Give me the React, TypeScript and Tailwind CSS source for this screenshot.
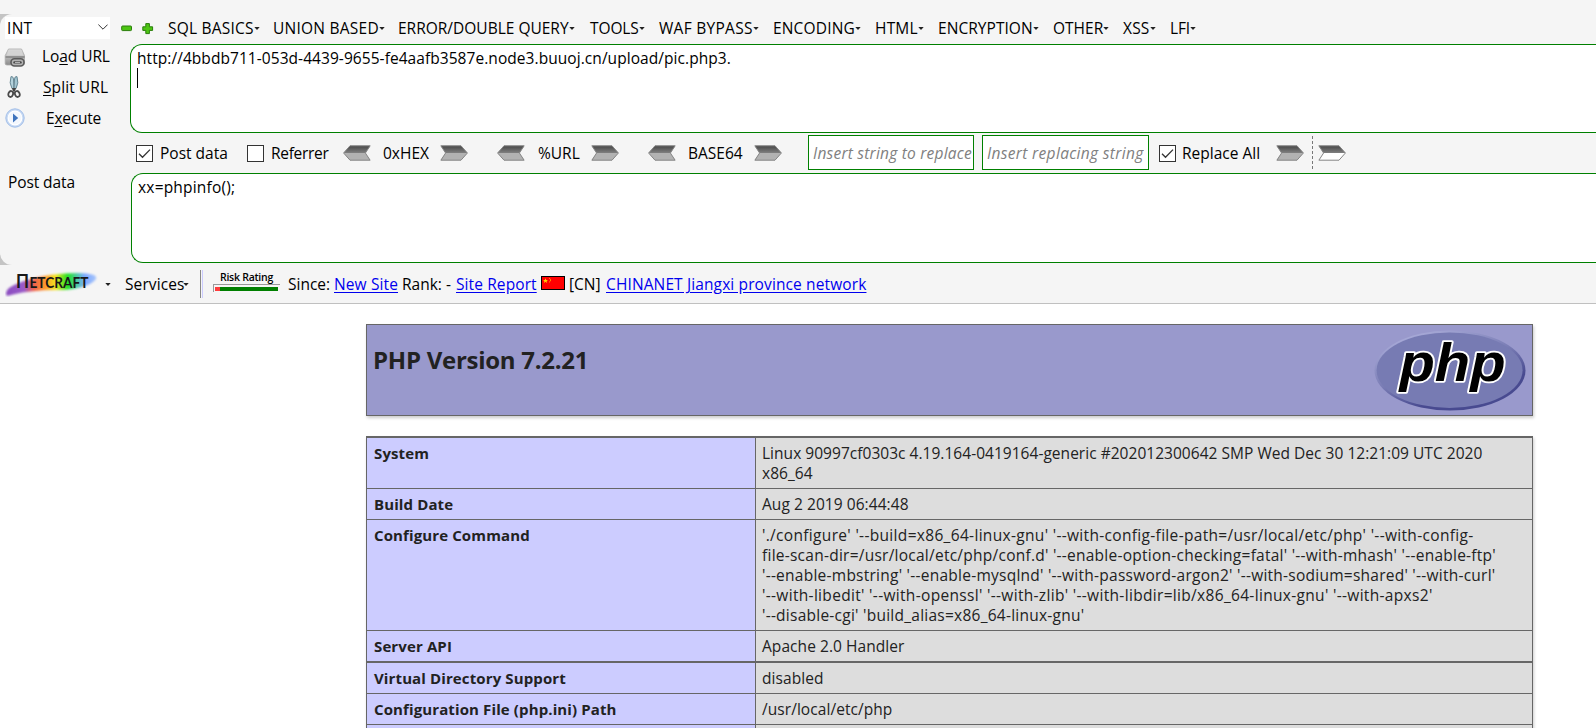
import type { ReactNode } from "react";

const menus = [
  { label: "SQL BASICS", box: "w-[105px] tracking-[0.22px]" },
  { label: "UNION BASED", box: "w-[125px] tracking-[0.24px]" },
  { label: "ERROR/DOUBLE QUERY", box: "w-[192px] tracking-[0px]" },
  { label: "TOOLS", box: "w-[69px] tracking-[-0.1px]" },
  { label: "WAF BYPASS", box: "w-[114px] tracking-[0.28px]" },
  { label: "ENCODING", box: "w-[102px] tracking-[0.16px]" },
  { label: "HTML", box: "w-[63px] tracking-[0.2px]" },
  { label: "ENCRYPTION", box: "w-[115px] tracking-[0.05px]" },
  { label: "OTHER", box: "w-[70px]" },
  { label: "XSS", box: "w-[47px] tracking-[0.2px]" },
  { label: "LFI", box: "w-[40px] tracking-[-0.2px]" },
];

function Caret({ className = "" }: { className?: string }) {
  return (
    <svg className={`h-[3px] w-[6px] shrink-0 ${className}`} viewBox="0 0 6 3">
      <path d="M0.3 0H5.7L3 2.9Z" fill="#222" />
    </svg>
  );
}

function Arrow({ left = false, hollow = false }: { left?: boolean; hollow?: boolean }) {
  return (
    <svg className={`h-[16px] w-[28px] shrink-0 ${left ? "-scale-x-100" : ""}`} viewBox="0 0 28 16">
      <defs>
        <linearGradient id="arrowTop" x1="0" y1="0" x2="0" y2="1">
          <stop offset="0" stopColor="#464646" />
          <stop offset="1" stopColor="#808080" />
        </linearGradient>
      </defs>
      <path d="M0.6 0.8H21L27.4 8H5.6Z" fill="url(#arrowTop)" />
      <path d="M5.6 8H27.4L21 15.2H0.6Z" fill={hollow ? "#fff" : "#b2b2b2"} />
      <path d="M0.9 0.8H21L27.4 8L21 15.2H0.9L5.6 8Z" fill="none" stroke="#858585" strokeWidth="1" />
    </svg>
  );
}

function Check({ on = false, className = "" }: { on?: boolean; className?: string }) {
  return (
    <span className={`flex h-[17px] w-[17px] shrink-0 items-center justify-center border border-[#333] bg-white ${className}`}>
      {on && (
        <svg className="h-[13px] w-[13px]" viewBox="0 0 13 13">
          <path d="M1 6.8L4.5 10.3L12 2.6" fill="none" stroke="#333" strokeWidth="1.3" />
        </svg>
      )}
    </span>
  );
}

function DriveIcon() {
  return (
    <svg className="h-[20px] w-[22px]" viewBox="0 0 22 20">
      <defs>
        <linearGradient id="drive" x1="0" y1="0" x2="0" y2="1">
          <stop offset="0" stopColor="#e4e4e4" />
          <stop offset="1" stopColor="#8b8b8b" />
        </linearGradient>
      </defs>
      <path d="M4.5 1H17.5L20.5 7.5V15.5Q20.5 17 19 17H3Q1.2 17 1.2 15.5V7.5Z" fill="url(#drive)" stroke="#aaa" strokeWidth="0.8" />
      <path d="M5 2.2H17L19.4 7.5H2.6Z" fill="#d4d4d4" />
      <rect x="1.6" y="8.2" width="19" height="1.6" fill="#858585" />
      <rect x="7" y="10.8" width="13" height="7.2" rx="3.4" fill="#b4b4b4" stroke="#5a5a5a" strokeWidth="1.6" />
      <path d="M10.5 14.4H16.5" stroke="#4a4a4a" strokeWidth="2.4" strokeLinecap="round" />
      <path d="M11 14.4H16" stroke="#ddd" strokeWidth="0.8" />
    </svg>
  );
}

function ScissorsIcon() {
  return (
    <svg className="h-[24px] w-[14px]" viewBox="0 0 14 24">
      <path d="M4 1.6Q6.2 1 6.5 4L7 13.6L5 13.6Q1.8 8 4 1.6Z" fill="#b5d3dd" stroke="#5d7f8c" strokeWidth="0.9" />
      <path d="M10 1.6Q7.8 1 7.5 4L7 13.6L9 13.6Q12.2 8 10 1.6Z" fill="#a3c6d2" stroke="#5d7f8c" strokeWidth="0.9" />
      <path d="M5 13L9 13L8 16.5H6Z" fill="#444" />
      <ellipse cx="3.7" cy="19" rx="2.3" ry="3" transform="rotate(22 3.7 19)" fill="none" stroke="#4a4a4a" strokeWidth="1.8" />
      <ellipse cx="10.3" cy="19" rx="2.3" ry="3" transform="rotate(-22 10.3 19)" fill="none" stroke="#4a4a4a" strokeWidth="1.8" />
    </svg>
  );
}

function PlayIcon() {
  return (
    <svg className="h-[20px] w-[20px]" viewBox="0 0 20 20">
      <circle cx="10" cy="10" r="9.2" fill="#c5d8f3" stroke="#a3bfe8" strokeWidth="1" />
      <circle cx="10" cy="10" r="6.8" fill="#f3f7fd" stroke="#fff" strokeWidth="1.2" />
      <path d="M8 5.4L13.2 10L8 14.6Z" fill="#3f74bd" />
    </svg>
  );
}

function Netcraft() {
  return (
    <svg className="h-[26px] w-[94px] shrink-0" viewBox="0 0 94 26">
      <defs>
        <linearGradient id="rainbow" x1="0" y1="0" x2="1" y2="0">
          <stop offset="0" stopColor="#8a4cc0" />
          <stop offset="0.2" stopColor="#9a5ac8" />
          <stop offset="0.31" stopColor="#f0604a" />
          <stop offset="0.44" stopColor="#ff9a2a" />
          <stop offset="0.55" stopColor="#f2e520" />
          <stop offset="0.68" stopColor="#20e020" />
          <stop offset="0.79" stopColor="#50c8a8" />
          <stop offset="0.87" stopColor="#7aa6ff" />
          <stop offset="1" stopColor="#a9c6fb" />
        </linearGradient>
        <filter id="soften"><feGaussianBlur stdDeviation="0.8" /></filter>
      </defs>
      <path d="M1.5 24.5Q-1 19 9 14Q32 4 60 2.5Q80 1 89 4Q94 7 88 11Q76 19 52 19Q26 19 8 23.5Q4 25 1.5 24.5Z" fill="url(#rainbow)" filter="url(#soften)" />
      <text x="11" y="17.2" fontFamily="Lato, sans-serif" fontWeight="700" fontSize="18" textLength="13" lengthAdjust="spacingAndGlyphs" fill="#181818">Π</text>
      <text x="24.5" y="17.2" fontFamily="Lato, sans-serif" fontWeight="700" fontSize="15" textLength="59" lengthAdjust="spacingAndGlyphs" fill="#181818">ETCRAFT</text>
    </svg>
  );
}

function RiskRating() {
  return (
    <span className="flex w-[67px] shrink-0 flex-col items-center">
      <span className="h-[12px] text-[10.5px] leading-[10px] font-semibold tracking-[-0.25px] whitespace-nowrap text-black">Risk Rating</span>
      <span className="flex h-[8px] w-[67px] border-t border-l border-[#999] pt-[2px] pr-[2px] pl-[1px]">
        <span className="h-[4px] w-[5px] bg-[#ff3c3c]" />
        <span className="h-[4px] flex-1 bg-[#007f00]" />
      </span>
    </span>
  );
}

function Flag() {
  return (
    <svg className="h-[14px] w-[24px] shrink-0" viewBox="0 0 24 14">
      <rect x="0.5" y="0.5" width="23" height="13" fill="#f00" stroke="#000" />
      <path d="M4.5 2.2L5.2 4H7L5.6 5.1L6.1 7L4.5 5.8L2.9 7L3.4 5.1L2 4H3.8Z" fill="#ffd800" />
      <path d="M8 2.2L9.5 3.2V5L8 6.4" fill="none" stroke="#ff9a00" strokeWidth="0.9" />
    </svg>
  );
}

function PhpLogo() {
  return (
    <svg className="h-[81px] w-[152px]" viewBox="0 0 152 81">
      <defs>
        <linearGradient id="rim" x1="0.2" y1="0" x2="0.8" y2="1">
          <stop offset="0" stopColor="#aeb0dc" />
          <stop offset="0.45" stopColor="#7a7db5" />
          <stop offset="0.75" stopColor="#484a90" />
          <stop offset="1" stopColor="#484a90" />
        </linearGradient>
      </defs>
      <ellipse cx="76" cy="40.5" rx="75.5" ry="40" fill="url(#rim)" />
      <ellipse cx="75.6" cy="40.2" rx="73" ry="37.8" fill="#777bb3" />
      <text x="25.5" y="51" fontFamily="Liberation Sans, sans-serif" fontWeight="700" fontStyle="italic" fontSize="54" textLength="106" lengthAdjust="spacingAndGlyphs" fill="#000" stroke="#fff" strokeWidth="3.6" strokeLinejoin="round" paintOrder="stroke">php</text>
    </svg>
  );
}

function Row({ name, lines, tall = "", top = "border-t" }: { name: string; lines: ReactNode; tall?: string; top?: string }) {
  return (
    <div className={`grid grid-cols-[388px_1fr] border-[#666] ${top}`}>
      <div className={`bg-[#ccccff] pt-[5px] pl-[7px] text-[15px] font-bold tracking-[0.12px] ${tall || "h-[30px]"}`}>{name}</div>
      <div className="border-l border-[#666] bg-[#dddddd] pt-[5px] pl-[6px] tracking-[0.06px] whitespace-nowrap">{lines}</div>
    </div>
  );
}

export default function App() {
  return (
    <div className="flex h-[728px] w-[1596px] flex-col overflow-hidden bg-white font-['Open_Sans',sans-serif] text-[15.5px] leading-[20px] text-black">
      <div className="h-[14px] shrink-0 bg-[#f5f5f5]" />
      <div className="h-[251px] shrink-0 bg-[#c4c4c4]">
        <div className="flex h-full flex-col rounded-l-[12px] bg-[#f5f5f5]">
          <div className="flex h-[30px] shrink-0 items-start">
            <div className="mt-[3px] ml-[5px] flex h-[22px] w-[105px] items-center justify-between bg-white pr-[2px] pl-[2px]">
              <span className="tracking-[0.3px]">INT</span>
              <svg className="mb-[3px] h-[6px] w-[10px]" viewBox="0 0 10 6">
                <path d="M0.4 0.6L5 5.2L9.6 0.6" fill="none" stroke="#333" />
              </svg>
            </div>
            <svg className="mt-[9px] ml-[11px] h-[12px] w-[33px]" viewBox="0 0 33 12">
              <rect x="0.7" y="3" width="9.8" height="4.6" rx="0.8" fill="#4cc512" stroke="#2b7d0c" />
              <path d="M24.8 0.6H28.4V3.8H31.6V7.4H28.4V10.6H24.8V7.4H21.8V3.8H24.8Z" fill="#4cc512" stroke="#2b7d0c" strokeLinejoin="round" />
            </svg>
            <div className="ml-[14px] flex pt-[4px]">
              {menus.map((m) => (
                <div key={m.label} className={`flex items-center whitespace-nowrap ${m.box}`}>
                  {m.label}
                  <Caret />
                </div>
              ))}
            </div>
          </div>

          <div className="flex h-[89px] shrink-0">
            <div className="-mt-[2px] flex w-[130px] flex-col">
              <div className="flex h-[31px] items-center">
                <span className="flex w-[42px] pt-[1px] pl-[4px]"><DriveIcon /></span>
                <span className="-mt-[2px] tracking-[-0.08px]">Lo<u className="underline-offset-2">a</u>d URL</span>
              </div>
              <div className="flex h-[31px] items-center">
                <span className="flex w-[43px] pl-[7px]"><ScissorsIcon /></span>
                <span className="-mt-[1px] tracking-[0.08px]"><u className="underline-offset-2">S</u>plit URL</span>
              </div>
              <div className="flex h-[31px] items-center">
                <span className="flex w-[46px] pl-[5px]"><PlayIcon /></span>
                <span className="tracking-[-0.25px]">E<u className="underline-offset-2">x</u>ecute</span>
              </div>
            </div>
            <div className="flex-1 rounded-l-[12px] border border-r-0 border-[#008000] bg-white pt-[3px] pl-[6px]">
              <div className="tracking-[0.06px]">http://4bbdb711-053d-4439-9655-fe4aafb3587e.node3.buuoj.cn/upload/pic.php3.</div>
              <div className="h-[20px] w-px bg-black" />
            </div>
          </div>

          <div className="flex h-[40px] shrink-0 items-center pb-[1px] pl-[136px]">
            <Check on className="mt-[2px]" />
            <span className="ml-[7px] w-[87px] pt-[1px]">Post data</span>
            <Check className="mt-[2px]" />
            <span className="ml-[7px] w-[72px] pt-[1px] tracking-[-0.3px]">Referrer</span>
            <Arrow left />
            <span className="ml-[12px] w-[57px]">0xHEX</span>
            <Arrow />
            <span className="w-[29px]" />
            <Arrow left />
            <span className="ml-[13px] w-[53px]">%URL</span>
            <Arrow />
            <span className="w-[29px]" />
            <Arrow left />
            <span className="ml-[12px] w-[66px]">BASE64</span>
            <Arrow />
            <div className="ml-[26px] flex h-[35px] w-[166px] items-center overflow-hidden border border-[#008000] bg-white pr-px pl-[4px] text-[#808080] italic">
              <span className="overflow-hidden pt-[1px] tracking-[0.22px] whitespace-nowrap">Insert string to replace</span>
            </div>
            <div className="ml-[8px] flex h-[35px] w-[167px] items-center overflow-hidden border border-[#008000] bg-white pr-[2px] pl-[4px] text-[#808080] italic">
              <span className="overflow-hidden pt-[1px] tracking-[0.33px] whitespace-nowrap">Insert replacing string</span>
            </div>
            <Check on className="mt-[2px] ml-[10px]" />
            <span className="ml-[6px] w-[94px] pt-[1px]">Replace All</span>
            <Arrow />
            <span className="mr-[5px] ml-[8px] h-[33px] border-l border-dashed border-[#777]" />
            <Arrow hollow />
          </div>

          <div className="flex h-[90px] shrink-0">
            <div className="-mt-[1px] w-[131px] shrink-0 pl-[8px] tracking-[-0.1px]">Post data</div>
            <div className="flex-1 rounded-l-[12px] border border-r-0 border-[#008000] bg-white pt-[3px] pl-[6px] tracking-[0.2px]">xx=phpinfo();</div>
          </div>
        </div>
      </div>

      <div className="flex h-[39px] shrink-0 items-center border-b border-[#c0c0c0] bg-[#f5f5f5] pl-[5px] whitespace-nowrap">
        <Netcraft />
        <Caret className="ml-[6px]" />
        <span className="ml-[14px] w-[58px] tracking-[0.1px]">Services</span>
        <Caret />
        <span className="ml-[11px] h-[28px] w-[3px] border-r border-l border-r-[#ccccff] border-l-[#888]" />
        <span className="ml-[10px] -mt-[5px] flex"><RiskRating /></span>
        <span className="ml-[8px] w-[46px]">Since:</span>
        <a className="w-[68px] tracking-[0.12px] text-[#0000ee] underline underline-offset-2">New Site</a>
        <span className="w-[54px]">Rank: -</span>
        <a className="w-[85px] tracking-[0.1px] text-[#0000ee] underline underline-offset-2">Site Report</a>
        <span className="-mt-[3px] flex"><Flag /></span>
        <span className="ml-[4px] w-[37px]">[CN]</span>
        <a className="tracking-[0.12px] text-[#0000ee] underline underline-offset-2">CHINANET Jiangxi province network</a>
      </div>

      <div className="ml-[366px] flex w-[1167px] shrink-0 flex-col pt-[20px] text-[#222]">
        <div className="flex h-[92px] justify-between border border-[#666] bg-[#9999cc] pl-[6px] shadow-[1px_2px_3px_#ccc]">
          <h1 className="mt-[19px] text-[24px] leading-[32px] font-bold tracking-[-0.27px]">PHP Version 7.2.21</h1>
          <div className="mt-[5px] mr-[6px]"><PhpLogo /></div>
        </div>
        <div className="mt-[20px] flex flex-col border-r border-l border-[#666] shadow-[1px_2px_3px_#ccc]">
          <Row
            name="System"
            tall="h-[50px]"
            top="border-t-2"
            lines={
              <>
                <div className="tracking-[0.03px]">Linux 90997cf0303c 4.19.164-0419164-generic #202012300642 SMP Wed Dec 30 12:21:09 UTC 2020</div>
                <div>x86_64</div>
              </>
            }
          />
          <Row name="Build Date" lines="Aug 2 2019 06:44:48" />
          <Row
            name="Configure Command"
            tall="h-[110px]"
            lines={
              <div className="tracking-[0.25px]">
                <div className="tracking-[0.32px]">'./configure' '--build=x86_64-linux-gnu' '--with-config-file-path=/usr/local/etc/php' '--with-config-</div>
                <div>file-scan-dir=/usr/local/etc/php/conf.d' '--enable-option-checking=fatal' '--with-mhash' '--enable-ftp'</div>
                <div>'--enable-mbstring' '--enable-mysqlnd' '--with-password-argon2' '--with-sodium=shared' '--with-curl'</div>
                <div className="tracking-[0.32px]">'--with-libedit' '--with-openssl' '--with-zlib' '--with-libdir=lib/x86_64-linux-gnu' '--with-apxs2'</div>
                <div>'--disable-cgi' 'build_alias=x86_64-linux-gnu'</div>
              </div>
            }
          />
          <Row name="Server API" lines="Apache 2.0 Handler" />
          <Row name="Virtual Directory Support" top="border-t-2" lines="disabled" />
          <Row name="Configuration File (php.ini) Path" lines="/usr/local/etc/php" />
          <Row name="" lines="" />
        </div>
      </div>
    </div>
  );
}
